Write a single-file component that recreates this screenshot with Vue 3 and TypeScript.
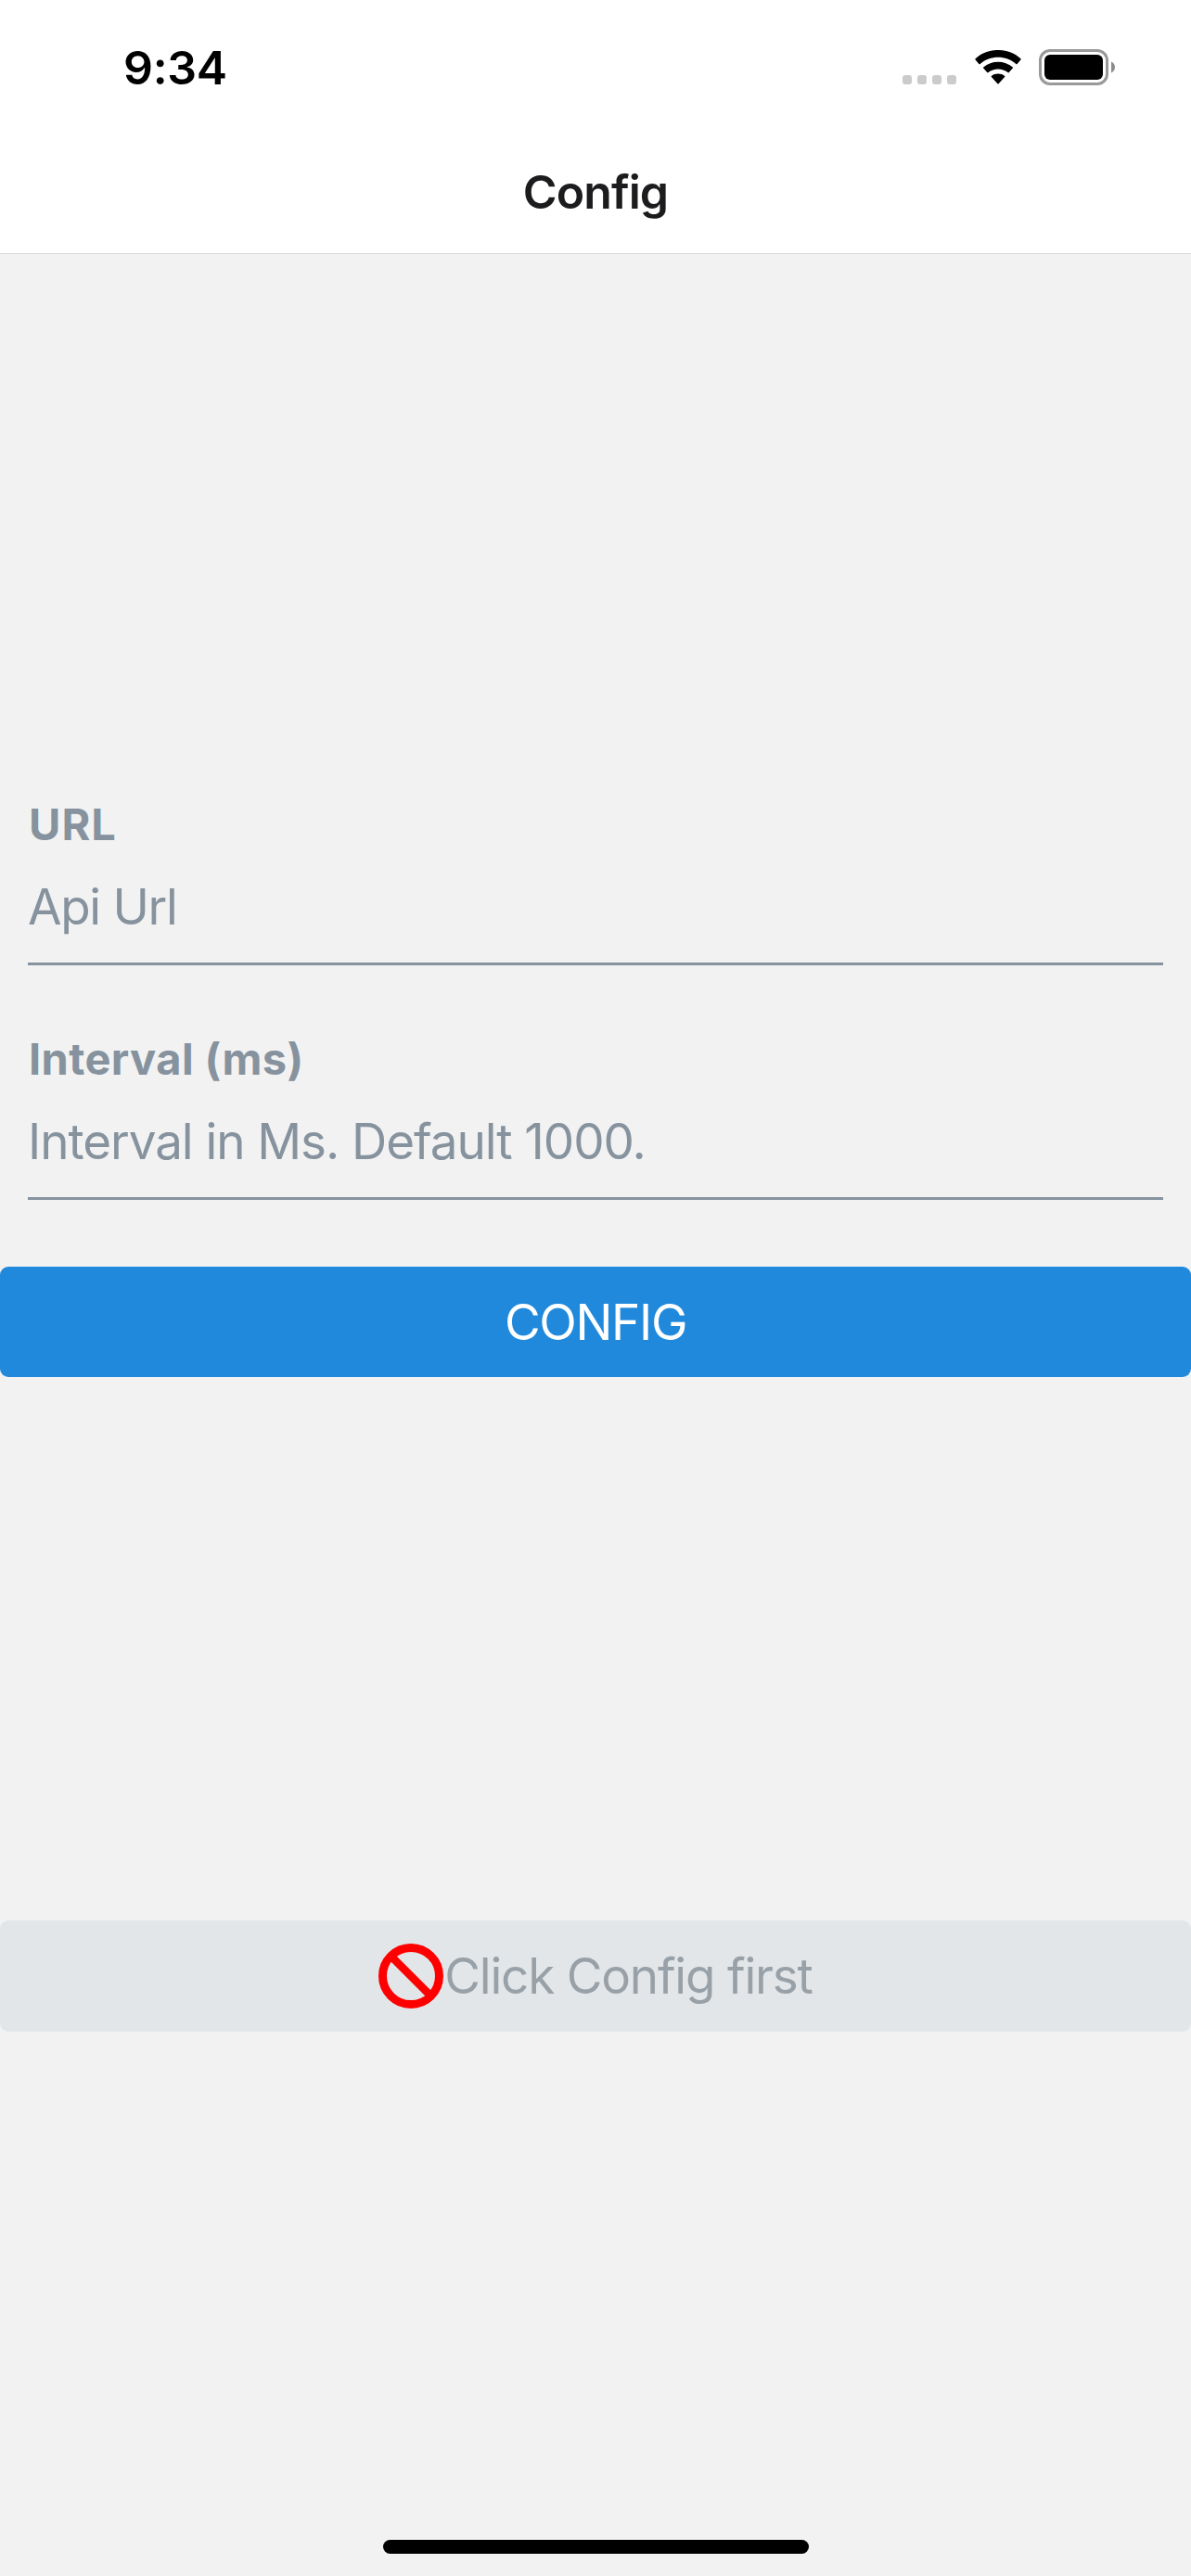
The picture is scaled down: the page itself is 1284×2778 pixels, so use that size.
<script setup lang="ts">
import { ref } from 'vue'

interface Field {
  id: string
  label: string
  placeholder: string
}

const fields: Field[] = [
  { id: 'url', label: 'URL', placeholder: 'Api Url' },
  { id: 'interval', label: 'Interval (ms)', placeholder: 'Interval in Ms. Default 1000.' },
]

const values = ref<Record<string, string>>({ url: '', interval: '' })
const configured = ref(false)
</script>

<template>
  <div class="screen">
    <header class="top">
      <div class="status">
        <span class="time">9:34</span>
        <div class="indicators">
          <svg class="cell" width="58" height="10" viewBox="0 0 58 10" fill="#cbcbcb">
            <rect v-for="n in 4" :key="n" :x="(n - 1) * 16" y="0" width="10" height="10" rx="3" />
          </svg>
          <svg class="wifi" width="50" height="37" viewBox="0 0 50 37">
            <path d="M0.6 10.4Q0 9.8 0.6 9.2C14-3.1 36-3.1 49.4 9.2Q50 9.8 49.4 10.4L45.6 14.9Q45 15.5 44.3 14.9C33.5 5.2 16.5 5.2 5.7 14.9Q5 15.5 4.4 14.9Z" />
            <path d="M9.2 19.6Q8.6 19 9.2 18.4C18 10.7 32 10.7 40.8 18.4Q41.4 19 40.8 19.6L36.8 24.1Q36.2 24.7 35.5 24.1C29.5 19.2 20.5 19.2 14.5 24.1Q13.8 24.7 13.2 24.1Z" />
            <path d="M17.9 29.1Q17.3 28.5 17.9 27.9C22 24.7 28 24.7 32.1 27.9Q32.7 28.5 32.1 29.1L25.6 36.3Q25 36.9 24.4 36.3Z" />
          </svg>
          <svg class="battery" width="83" height="40" viewBox="0 0 83 40">
            <rect x="1.5" y="1.5" width="72" height="36" rx="10.5" fill="none" stroke="#999" stroke-width="3" />
            <rect x="6" y="6" width="63" height="27" rx="6" />
            <path d="M78 13.5C80.4 14.5 82 16.8 82 19.5S80.4 24.5 78 25.5Z" fill="#8c8c8c" />
          </svg>
        </div>
      </div>
      <h1 class="title">Config</h1>
    </header>

    <main class="body">
      <form class="form" @submit.prevent="configured = true">
        <div v-for="field in fields" :key="field.id" class="field">
          <label :for="field.id" :class="['label', 'label-' + field.id]">{{ field.label }}</label>
          <input
            :id="field.id"
            v-model="values[field.id]"
            :class="['input', 'input-' + field.id]"
            :placeholder="field.placeholder"
            autocomplete="off"
          />
        </div>
        <button type="submit" class="button primary">CONFIG</button>
      </form>

      <button type="button" class="button start" :disabled="!configured">
        <svg class="ban" width="70" height="70" viewBox="0 0 70 70" fill="none" stroke="#f00">
          <circle cx="35" cy="35" r="30.5" stroke-width="9" />
          <path d="M15 15L55 55" stroke-width="8.6" />
        </svg>
        <span>Click Config first</span>
      </button>
    </main>

    <div class="home"></div>
  </div>
</template>

<style>
body {
  margin: 0;
  background: #f2f2f2;
}
</style>

<style scoped>
.screen {
  display: flex;
  flex-direction: column;
  width: 1284px;
  height: 2778px;
  overflow: hidden;
  background: #f2f2f2;
  font-family: Inter, "Liberation Sans", sans-serif;
}

.top {
  box-sizing: border-box;
  height: 274px;
  flex: none;
  background: #fff;
  border-bottom: 1px solid #d8d8d8;
}

.status {
  display: flex;
  justify-content: space-between;
  height: 141px;
  padding: 0 81px 0 133px;
}

.time {
  margin-top: 43px;
  height: 60px;
  font-size: 50px;
  line-height: 60px;
  font-weight: 600;
  letter-spacing: -0.35px;
  color: #000;
}

.indicators {
  display: flex;
  align-items: flex-start;
}

.cell {
  margin-top: 81px;
}

.wifi {
  margin: 54px 0 0 20px;
}

.battery {
  margin: 53px 0 0 19px;
}

.title {
  margin: 36px 0 0;
  font-size: 50px;
  line-height: 60px;
  font-weight: 600;
  letter-spacing: -0.94px;
  text-align: center;
  color: #1c1c1e;
}

.body {
  flex: 1;
  display: flex;
  flex-direction: column;
}

.form {
  display: flex;
  flex-direction: column;
  padding-top: 586px;
}

.field {
  display: flex;
  flex-direction: column;
  height: 253px;
  padding: 0 30px;
}

.label {
  height: 58px;
  padding-left: 1px;
  font-size: 47px;
  line-height: 58px;
  font-weight: 700;
  color: #86939e;
}

.label-url {
  letter-spacing: 1px;
}

.label-interval {
  letter-spacing: 0.4px;
}

.input {
  box-sizing: border-box;
  height: 123px;
  margin: 0;
  padding: 0;
  border: 0;
  border-bottom: 3px solid #86939e;
  border-radius: 0;
  background: none;
  outline: none;
  font: 400 53px/64px Inter, "Liberation Sans", sans-serif;
  letter-spacing: -1.07px;
  color: #000;
}

.input-url {
  letter-spacing: -1.33px;
}

.input::placeholder {
  color: #86939e;
  opacity: 1;
}

.button {
  display: flex;
  align-items: center;
  justify-content: center;
  width: 100%;
  height: 119px;
  margin: 0;
  padding: 0;
  border: 0;
  border-radius: 9px;
  font: 400 53px/64px Inter, "Liberation Sans", sans-serif;
}

.primary {
  background: #2089dc;
  letter-spacing: -1.34px;
  color: #fff;
}

.start {
  height: 120px;
  margin-top: 586px;
  letter-spacing: -1.2px;
}

.start:disabled {
  background: #e3e6e8;
  color: #99a1a8;
}

.ban {
  margin-right: 1px;
}

.home {
  flex: none;
  align-self: center;
  width: 459px;
  height: 15px;
  margin-bottom: 24px;
  border-radius: 8px;
  background: #000;
}
</style>
